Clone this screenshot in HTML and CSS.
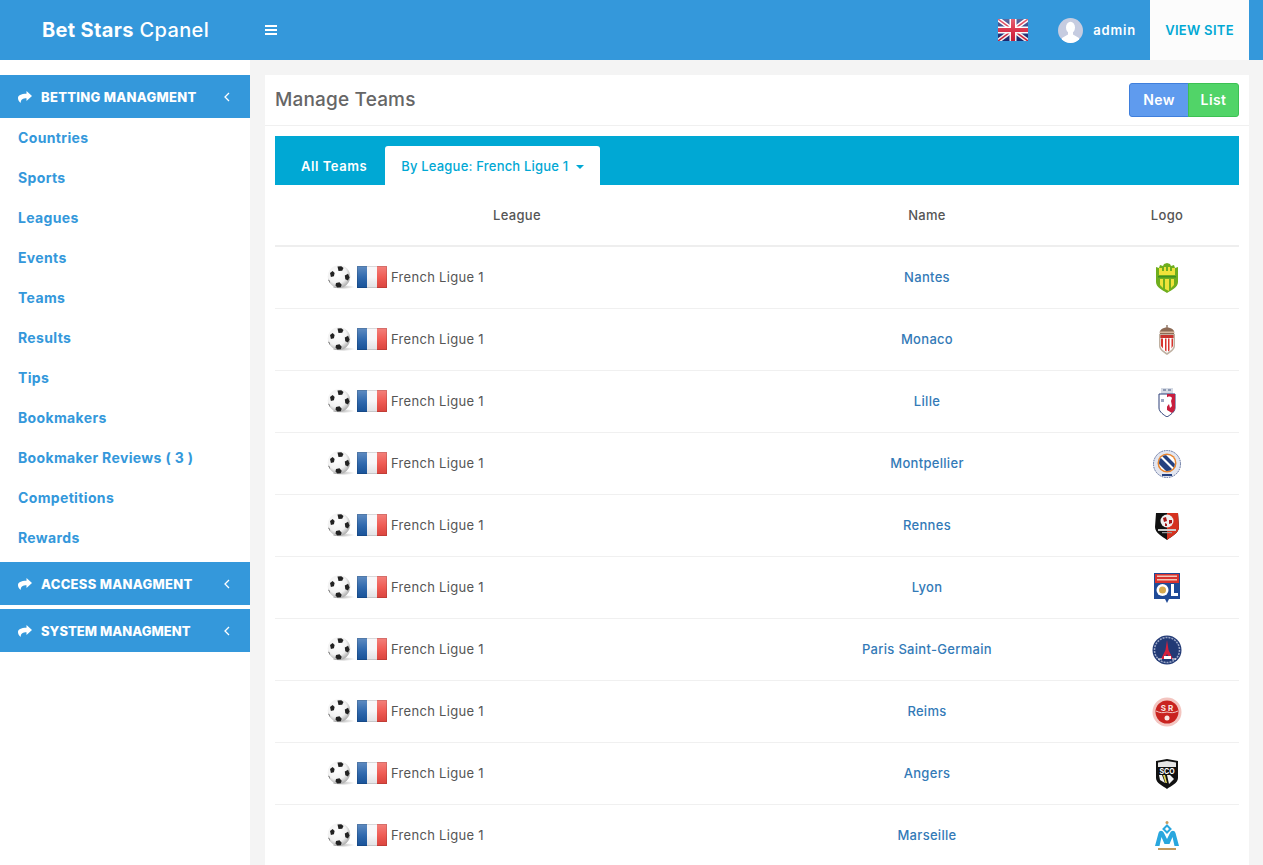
FILE: index.html
```html
<!DOCTYPE html>
<html lang="en">
<head>
  <meta charset="UTF-8" />
  <title>Bet Stars Cpanel</title>
  <link rel="stylesheet" href="styles.css">
</head>
<body>
  <!-- shared icons -->
  <svg class="defs" width="0" height="0">
    <defs>
      <radialGradient id="ballShade" cx="0.42" cy="0.38" r="0.7">
        <stop offset="0" stop-color="#fff"/><stop offset="0.6" stop-color="#f2f2f2"/><stop offset="1" stop-color="#9a9a9a"/>
      </radialGradient>
      <linearGradient id="ballShadow" x1="0" y1="0" x2="1" y2="0">
        <stop offset="0" stop-color="#999"/><stop offset="1" stop-color="#999" stop-opacity="0"/>
      </linearGradient>
      <linearGradient id="gloss" x1="0" y1="0" x2="0" y2="1">
        <stop offset="0" stop-color="#fff" stop-opacity="0.3"/><stop offset="0.5" stop-color="#fff" stop-opacity="0.1"/><stop offset="1" stop-color="#000" stop-opacity="0.08"/>
      </linearGradient>
      <symbol id="share" viewBox="0 0 14 12">
        <path d="M8.500 0L14 5 8.500 10V7.200C5 7.200 3 8 2.600 12 .3 10 0 8 0 7 0 4.500 3 2.800 8.500 2.800z" fill="#fff"/>
      </symbol>
      <symbol id="ball" viewBox="0 0 28 24">
        <ellipse cx="17" cy="22" rx="11" ry="1.500" fill="url(#ballShadow)"/>
        <circle cx="12" cy="11.500" r="11.200" fill="url(#ballShade)"/>
        <path d="M10.500 1.500l3.800-.3 2.200 1.800-1.300 2.700-3.700.3z" fill="#222"/>
        <path d="M3 8l2.600-2 2 2-.7 3.200-3 .7z" fill="#222"/>
        <path d="M17.800 10.500l3.300-1.800 1.400 3.700-1.500 3.100-2.700-1.300z" fill="#222"/>
        <path d="M9 18l3.500-.7 2.200 2.500-.9 2.400-3.500.2-1.800-2z" fill="#222"/>
        <path d="M1 14.500l1.500 1 .8 3z" fill="#444"/>
      </symbol>
      <symbol id="fr" viewBox="0 0 30 22">
        <rect width="10" height="22" fill="#1b5aa6"/>
        <rect x="10" width="10" height="22" fill="#f6f6f8"/>
        <rect x="20" width="10" height="22" fill="#ee4b43"/>
        <rect width="30" height="22" fill="url(#gloss)"/>
        <rect x=".5" y=".5" width="29" height="21" fill="none" stroke="#000" stroke-opacity="0.12"/>
      </symbol>
    </defs>
  </svg>

  <header class="topbar">
    <div class="brand"><b>Bet Stars</b> Cpanel</div>
    <a class="toggle" href="#" aria-label="Menu">
      <svg width="12" height="10" viewBox="0 0 12 10"><path d="M0 0h12v2H0zM0 4h12v2H0zM0 8h12v2H0z" fill="#fff"/></svg>
    </a>
    <div class="top-right">
      <svg class="uk" width="30" height="22" viewBox="0 0 30 22">
        <rect width="30" height="22" fill="#1b2a78"/>
        <path d="M0 0L30 22M30 0L0 22" stroke="#fff" stroke-width="4.500"/>
        <path d="M0 0L30 22M30 0L0 22" stroke="#d8203a" stroke-width="1.500"/>
        <path d="M15 0v22M0 11h30" stroke="#fff" stroke-width="7"/>
        <path d="M15 0v22M0 11h30" stroke="#d8203a" stroke-width="4"/>
        <rect width="30" height="22" fill="url(#gloss)"/>
      </svg>
      <div class="user">
        <svg width="25" height="25" viewBox="0 0 25 25">
          <circle cx="12.500" cy="12.500" r="12.500" fill="#c6cce0"/>
          <clipPath id="avatarClip"><circle cx="12.500" cy="12.500" r="12.500"/></clipPath>
          <g clip-path="url(#avatarClip)" fill="#fff">
            <ellipse cx="12.500" cy="9.500" rx="4.500" ry="5.800"/>
            <path d="M10 14h5v2.500l6 3.500v5H4v-5l6-3.500z"/>
          </g>
        </svg>
        <span>admin</span>
      </div>
      <a class="view-site" href="#">VIEW SITE</a>
    </div>
  </header>

  <div class="layout">
    <aside class="sidebar">
      <div class="side-head">
        <svg class="ico" width="14" height="12"><use href="#share"/></svg>
        <span>BETTING MANAGMENT</span>
        <svg class="chev" width="6" height="10" viewBox="0 0 6 10"><path d="M5 1L1 5l4 4" fill="none" stroke="#fff" stroke-width="1.300"/></svg>
      </div>
      <nav class="side-links">
        <a href="#">Countries</a>
        <a href="#">Sports</a>
        <a href="#">Leagues</a>
        <a href="#">Events</a>
        <a href="#">Teams</a>
        <a href="#">Results</a>
        <a href="#">Tips</a>
        <a href="#">Bookmakers</a>
        <a href="#">Bookmaker Reviews ( 3 )</a>
        <a href="#">Competitions</a>
        <a href="#">Rewards</a>
      </nav>
      <div class="side-head">
        <svg class="ico" width="14" height="12"><use href="#share"/></svg>
        <span>ACCESS MANAGMENT</span>
        <svg class="chev" width="6" height="10" viewBox="0 0 6 10"><path d="M5 1L1 5l4 4" fill="none" stroke="#fff" stroke-width="1.300"/></svg>
      </div>
      <div class="side-head head-tight">
        <svg class="ico" width="14" height="12"><use href="#share"/></svg>
        <span>SYSTEM MANAGMENT</span>
        <svg class="chev" width="6" height="10" viewBox="0 0 6 10"><path d="M5 1L1 5l4 4" fill="none" stroke="#fff" stroke-width="1.300"/></svg>
      </div>
    </aside>

    <main class="content">
      <section class="card">
        <div class="card-head">
          <h2>Manage Teams</h2>
          <div class="btn-group">
            <a class="btn btn-new" href="#">New</a>
            <a class="btn btn-list" href="#">List</a>
          </div>
        </div>
        <div class="card-body">
          <ul class="tabs">
            <li><a href="#">All Teams</a></li>
            <li class="active"><a href="#">By League: French Ligue 1 <i class="caret"></i></a></li>
          </ul>
          <table class="teams">
            <colgroup><col class="c-league"><col class="c-name"><col class="c-logo"></colgroup>
            <thead>
              <tr><th>League</th><th>Name</th><th>Logo</th></tr>
            </thead>
            <tbody>
              <tr>
                <td class="league"><svg width="28" height="24"><use href="#ball"/></svg><svg class="flag" width="30" height="22"><use href="#fr"/></svg><span>French Ligue 1</span></td>
                <td class="name"><a href="#">Nantes</a></td>
                <td class="logo">
                  <svg width="24" height="30" viewBox="0 0 24 30">
                    <path d="M1 4l3 1 1-3 3 1 1-2 3-1 3 1 1 2 3-1 1 3 3-1v15c0 5-6 8-11 11C7 27 1 24 1 19z" fill="#6fae1e"/>
                    <path d="M4 5h3v3h2V4h2v4h2V4h2v4h2V5h3v7H4z" fill="#efe23a"/>
                    <rect x="3" y="13" width="18" height="1.500" fill="#3f8f22"/>
                    <path d="M5 16h3v9l-3-3zM10 16h4v12l-4-2zM16 16h3v6l-3 3z" fill="#efe23a"/>
                  </svg>
                </td>
              </tr>
              <tr>
                <td class="league"><svg width="28" height="24"><use href="#ball"/></svg><svg class="flag" width="30" height="22"><use href="#fr"/></svg><span>French Ligue 1</span></td>
                <td class="name"><a href="#">Monaco</a></td>
                <td class="logo">
                  <svg width="18" height="30" viewBox="0 0 18 30">
                    <path d="M9 0v3" stroke="#7a5c48" stroke-width="1.200"/>
                    <path d="M2 9C.5 5 5 2.500 9 2.500S17.500 5 16 9z" fill="#8d6b56"/>
                    <rect x="2" y="6.500" width="14" height="1.500" fill="#d9b9a0"/>
                    <path d="M1 9h16v12c0 4-5 7-8 9-3-2-8-5-8-9z" fill="#bfb1a2"/>
                    <path d="M2.500 13h13v8c0 3-4 5-6.500 7-2.500-2-6.500-4-6.500-7z" fill="#fff"/>
                    <path d="M3 13.500h2v10l-2-2.500zM7 13.500h1.500v13L7 25.500zM10 13.500h1.500v12l-1.500 1zM13.500 13.500H15v7.500l-1.500 2.500z" fill="#d8352f"/>
                    <rect x="2.500" y="10" width="13" height="3" fill="#c8352f"/>
                  </svg>
                </td>
              </tr>
              <tr>
                <td class="league"><svg width="28" height="24"><use href="#ball"/></svg><svg class="flag" width="30" height="22"><use href="#fr"/></svg><span>French Ligue 1</span></td>
                <td class="name"><a href="#">Lille</a></td>
                <td class="logo">
                  <svg width="18" height="30" viewBox="0 0 18 30">
                    <path d="M3 1h12v6H3z" fill="#d5dae4"/>
                    <path d="M5 2h3v2H5zM10 2h3v2h-3z" fill="#8d99b3"/>
                    <path d="M1 7h16v14c0 4-5 7-8 9-3-2-8-5-8-9z" fill="#fff" stroke="#2c3f78" stroke-width="1"/>
                    <path d="M9 7h8v14c0 2-1.500 3.500-3 5l-5-3z" fill="#c81e3e"/>
                    <path d="M8 11c2-2 5-2 6 0l-1 3 1 5-2 2-1-4-3 4c-2-3-1-7 0-10z" fill="#fff"/>
                    <path d="M3 12h3v3H3z" fill="#9aa5c0"/>
                  </svg>
                </td>
              </tr>
              <tr>
                <td class="league"><svg width="28" height="24"><use href="#ball"/></svg><svg class="flag" width="30" height="22"><use href="#fr"/></svg><span>French Ligue 1</span></td>
                <td class="name"><a href="#">Montpellier</a></td>
                <td class="logo">
                  <svg width="30" height="30" viewBox="0 0 30 30">
                    <circle cx="15" cy="15" r="14" fill="#e3e6f0"/>
                    <circle cx="15" cy="15" r="13.500" fill="none" stroke="#5e6f9c" stroke-width="1" stroke-dasharray="1.500 1"/>
                    <circle cx="15" cy="14" r="9.500" fill="#e9852c"/>
                    <clipPath id="mhscClip"><circle cx="15" cy="14" r="8"/></clipPath>
                    <g clip-path="url(#mhscClip)">
                      <rect x="6" y="5" width="18" height="18" fill="#fff"/>
                      <path d="M2 10L20 28l4-4L6 6zM10 2l18 18-2 3L8 5z" fill="#24407f"/>
                    </g>
                    <rect x="10" y="25" width="10" height="2" fill="#24407f"/>
                  </svg>
                </td>
              </tr>
              <tr>
                <td class="league"><svg width="28" height="24"><use href="#ball"/></svg><svg class="flag" width="30" height="22"><use href="#fr"/></svg><span>French Ligue 1</span></td>
                <td class="name"><a href="#">Rennes</a></td>
                <td class="logo">
                  <svg width="24" height="28" viewBox="0 0 24 28">
                    <path d="M1 1h22l1 14c0 6-7 9-12 13C7 24 0 21 0 15z" fill="#111"/>
                    <path d="M12 1h11l1 14c0 6-7 9-12 13z" fill="#d5321f"/>
                    <circle cx="12" cy="9" r="6.500" fill="#eee"/>
                    <path d="M8 6l3-1 1 4-3 1zM14 8h3v3l-3 1zM10 11l2 1v2h-2z" fill="#a81616"/>
                    <rect x="3" y="17" width="18" height="2" fill="#ccc"/>
                    <rect x="7" y="20" width="10" height="1.200" fill="#999"/>
                  </svg>
                </td>
              </tr>
              <tr>
                <td class="league"><svg width="28" height="24"><use href="#ball"/></svg><svg class="flag" width="30" height="22"><use href="#fr"/></svg><span>French Ligue 1</span></td>
                <td class="name"><a href="#">Lyon</a></td>
                <td class="logo">
                  <svg width="26" height="30" viewBox="0 0 26 30">
                    <path d="M0 0h26v26H15l-2 4-2-4H0z" fill="#1f4a97"/>
                    <rect x="1" y="1" width="24" height="9" fill="#d8322e"/>
                    <path d="M3 2.500h20v1.500H3zM3 6h20v1.500H3z" fill="#f1c7b8"/>
                    <circle cx="8.500" cy="17" r="6" fill="#fff"/>
                    <circle cx="8.500" cy="17" r="3.500" fill="#d6a94e"/>
                    <path d="M17 11h3v9h4v3h-7z" fill="#fff"/>
                  </svg>
                </td>
              </tr>
              <tr>
                <td class="league"><svg width="28" height="24"><use href="#ball"/></svg><svg class="flag" width="30" height="22"><use href="#fr"/></svg><span>French Ligue 1</span></td>
                <td class="name"><a href="#">Paris Saint-Germain</a></td>
                <td class="logo">
                  <svg width="30" height="30" viewBox="0 0 30 30">
                    <circle cx="15" cy="15" r="14.500" fill="#223a75"/>
                    <circle cx="15" cy="15" r="12.500" fill="none" stroke="#9aa6c6" stroke-width="1.500" stroke-dasharray="2 1"/>
                    <path d="M15 5l1.500 10 4.500 9h-3L15 19l-3 5H9l4.500-9z" fill="#d4213d"/>
                    <path d="M12 21h7v3h-7z" fill="#fff"/>
                    <path d="M6 24h4M20 24h4" stroke="#fff" stroke-width="1"/>
                  </svg>
                </td>
              </tr>
              <tr>
                <td class="league"><svg width="28" height="24"><use href="#ball"/></svg><svg class="flag" width="30" height="22"><use href="#fr"/></svg><span>French Ligue 1</span></td>
                <td class="name"><a href="#">Reims</a></td>
                <td class="logo">
                  <svg width="30" height="30" viewBox="0 0 30 30">
                    <circle cx="15" cy="15" r="14.500" fill="#f3c5c0"/>
                    <circle cx="15" cy="15" r="11.500" fill="#c9231f"/>
                    <path d="M4 14c4 2 7 2 11 1 4 1 7 1 11-1" fill="none" stroke="#f3c5c0" stroke-width="1"/>
                    <text class="crest-text" x="15" y="14" font-size="8" text-anchor="middle" fill="#f8e6e2">S R</text>
                    <circle cx="15" cy="21" r="2.500" fill="#f8e6e2"/>
                  </svg>
                </td>
              </tr>
              <tr>
                <td class="league"><svg width="28" height="24"><use href="#ball"/></svg><svg class="flag" width="30" height="22"><use href="#fr"/></svg><span>French Ligue 1</span></td>
                <td class="name"><a href="#">Angers</a></td>
                <td class="logo">
                  <svg width="24" height="30" viewBox="0 0 24 30">
                    <path d="M1 2l11-2 11 2v17c0 5-7 8-11 11C8 27 1 24 1 19z" fill="#111"/>
                    <path d="M3 3.500l9-1.500 9 1.500V8H3z" fill="#e6e6e6"/>
                    <path d="M3 9h18v6H3z" fill="#111"/>
                    <text class="crest-text" x="12" y="14.500" font-size="7" text-anchor="middle" fill="#fff">SCO</text>
                    <path d="M4 16h3l3 8-5-3zM12 16h3l4 4-5 5z" fill="#f2f2f2"/>
                    <path d="M8 16h2l2 8h-1.500z" fill="#e3d95a"/>
                  </svg>
                </td>
              </tr>
              <tr>
                <td class="league"><svg width="28" height="24"><use href="#ball"/></svg><svg class="flag" width="30" height="22"><use href="#fr"/></svg><span>French Ligue 1</span></td>
                <td class="name"><a href="#">Marseille</a></td>
                <td class="logo">
                  <svg width="26" height="30" viewBox="0 0 26 30">
                    <circle cx="13" cy="1.500" r="1.500" fill="#c49a5e"/>
                    <path d="M13 4.500l3.500 3.500-3.500 3.500L9.500 8z" fill="none" stroke="#2aa7de" stroke-width="2"/>
                    <path d="M1 25l3.500-13c1-3 4-3 5.500 0l3 6 3-6c1.500-3 4.500-3 5.500 0L25 25h-4.500l-2-9-3 7h-5l-3-7-2 9z" fill="#2aa7de"/>
                    <rect x="4" y="27" width="18" height="2" fill="#c49a5e"/>
                  </svg>
                </td>
              </tr>
            </tbody>
          </table>
        </div>
      </section>
    </main>
  </div>
</body>
</html>
```

FILE: styles.css
```css
:root {
  --blue: #3498db;
  --cyan: #00a8d4;
  --text: #555;
}
* { margin: 0; padding: 0; box-sizing: border-box; }
html, body { height: 865px; overflow: hidden; }
body { font-family: "Inter", "Open Sans", sans-serif; font-size: 13px; color: var(--text); background: #f4f4f4; letter-spacing: .3px; }
a { text-decoration: none; }
.defs { position: absolute; }

/* top bar */
.topbar { height: 60px; background: var(--blue); display: flex; align-items: center; color: #fff; }
.brand { width: 250px; padding-left: 42px; font-size: 20px; font-weight: 500; white-space: nowrap; letter-spacing: .35px; }
.brand b { font-weight: 700; }
.toggle { margin-left: 15px; display: flex; }
.top-right { margin-left: auto; margin-right: 14px; height: 60px; display: flex; align-items: center; }
.uk { margin-right: 30px; }
.user { display: flex; align-items: center; gap: 10px; margin-right: 14px; font-size: 13px; font-weight: 600; letter-spacing: .8px; }
.view-site { height: 60px; width: 99px; background: #fcfcfc; color: var(--cyan); font-size: 13px; font-weight: 600; letter-spacing: .3px; display: flex; align-items: center; justify-content: center; }

/* sidebar */
.layout { display: flex; height: 805px; }
.sidebar { width: 250px; background: #fff; padding-top: 15px; flex-shrink: 0; }
.side-head { height: 43px; background: var(--blue); color: #fff; display: flex; align-items: center; padding: 0 20px 0 18px; font-size: 13px; font-weight: 800; letter-spacing: .28px; margin-bottom: 4px; }
.head-tight { letter-spacing: .03px; }
.side-head .ico { margin-right: 9px; }
.side-head span { flex: 1; white-space: nowrap; }
.side-head:first-child { margin-bottom: 0; }
.side-links { display: flex; flex-direction: column; margin-bottom: 4px; }
.side-links a { height: 40px; line-height: 40px; padding-left: 18px; font-size: 14px; font-weight: 700; letter-spacing: .35px; color: var(--blue); }

/* main card */
.content { flex: 1; padding: 15px 14px 0 15px; min-width: 0; }
.card { background: #fff; height: 790px; overflow: hidden; }
.card-head { height: 51px; border-bottom: 1px solid #f0f0f0; display: flex; align-items: center; justify-content: space-between; padding: 0 10px; }
.card-head h2 { font-size: 19px; font-weight: 500; color: #666; letter-spacing: .17px; margin-bottom: 2px; }
.btn-group { display: flex; }
.btn { height: 34px; line-height: 32px; font-size: 14px; font-weight: 600; letter-spacing: .4px; color: #fff; text-align: center; border: 1px solid; }
.btn-new { width: 60px; background: #5f9bee; border-color: #3f7fdc; border-radius: 3px 0 0 3px; }
.btn-list { width: 51px; background: #51d468; border-color: #3cc153; border-radius: 0 3px 3px 0; margin-left: -1px; }
.card-body { padding: 10px 10px 0; }

/* tabs */
.tabs { list-style: none; height: 49px; background: var(--cyan); display: flex; align-items: flex-end; padding-left: 10px; }
.tabs a { display: block; height: 39px; line-height: 40px; padding: 0 16px; font-size: 13px; font-weight: 600; letter-spacing: .55px; color: #fff; white-space: nowrap; }
.tabs .active { margin-left: 2px; }
.tabs .active a { background: #fff; color: var(--cyan); border-radius: 3px 3px 0 0; font-weight: 500; letter-spacing: .2px; }
.caret { display: inline-block; border: 4px solid transparent; border-top-color: var(--cyan); border-bottom: 0; vertical-align: middle; margin-left: 4px; }

/* table */
.teams { width: 964px; border-collapse: collapse; table-layout: fixed; }
.c-league { width: 484px; }
.c-name { width: 336px; }
.c-logo { width: 144px; }
.teams th { height: 61px; border-bottom: 2px solid #eee; font-weight: 500; font-size: 13px; color: #555; text-align: center; }
.teams td { height: 62px; border-bottom: 1px solid #f0f0f0; text-align: center; vertical-align: middle; }
.teams td.league { text-align: left; padding-left: 52px; }
.league svg, .league span { vertical-align: middle; }
.league .flag { margin: 0 4px 0 2px; }
.name a { color: #337ab7; font-weight: 500; font-size: 13px; }
.logo svg { display: block; margin: 1px auto 0; }
.crest-text { font-weight: 700; letter-spacing: 0; }
```
